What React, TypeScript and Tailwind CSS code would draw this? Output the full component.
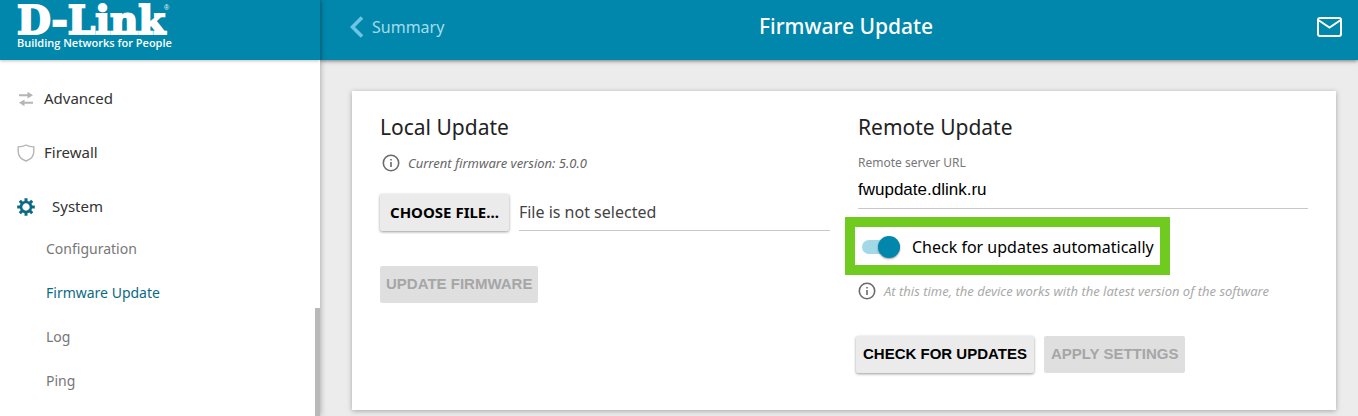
import { useState } from 'react';
import type { ReactNode } from 'react';

const systemLinks = ['Configuration', 'Firmware Update', 'Log', 'Ping'];

function Logo() {
  return (
    <svg className="block" width="164" height="54" viewBox="0 0 164 54" fill="#fff" role="img" aria-label="D-Link">
      <text x="1" y="34" fontFamily="'DejaVu Serif', serif" fontWeight="700" fontSize="39" stroke="#fff" strokeWidth="2">
        D-Link
      </text>
      <text x="148" y="10" fontFamily="'Liberation Sans', sans-serif" fontSize="7">®</text>
      <text x="1" y="47" fontFamily="'Open Sans', sans-serif" fontWeight="600" fontSize="11">
        Building Networks for People
      </text>
    </svg>
  );
}

function ArrowsIcon() {
  return (
    <svg width="16" height="16" viewBox="0 0 16 16" fill="#b5b5b5" aria-hidden="true">
      <path d="M1 3.200h8.500V.8L15 4.200 9.500 7.600V5.200H1zM15 10.800H6.500V8.400L1 11.800l5.500 3.400v-2.400H15z" />
    </svg>
  );
}

function ShieldIcon() {
  return (
    <svg width="18" height="18" viewBox="0 0 18 18" fill="none" stroke="#b5b5b5" strokeWidth="1.400" aria-hidden="true">
      <path d="M9 1C6.800 2.300 4 2.900 1.200 2.900v4.600C1.200 11.800 4.500 15.500 9 17c4.500-1.500 7.800-5.200 7.800-9.500V2.900C14 2.900 11.200 2.300 9 1z" />
    </svg>
  );
}

function GearIcon() {
  return (
    <svg width="18" height="18" viewBox="-9 -9 18 18" fill="none" stroke="#0b6a85" aria-hidden="true">
      <circle r="5" strokeWidth="2.600" />
      <path
        d="M0-5.500V-8.800M0 5.500V8.800M-5.500 0H-8.800M5.500 0H8.800M-3.900-3.900L-6.200-6.200M3.900-3.900L6.200-6.200M-3.900 3.900L-6.200 6.200M3.900 3.900L6.200 6.200"
        strokeWidth="3"
      />
    </svg>
  );
}

function InfoIcon() {
  return (
    <svg className="shrink-0" width="18" height="18" viewBox="0 0 18 18" aria-hidden="true">
      <circle cx="9" cy="9" r="7.700" fill="none" stroke="#6b6b6b" strokeWidth="1.600" />
      <path d="M8.200 8h1.600v5H8.200zM8.200 5h1.600v1.600H8.200z" fill="#6b6b6b" />
    </svg>
  );
}

function MenuItem({ icon, label, wide }: { icon: ReactNode; label: string; wide?: boolean }) {
  return (
    <a href="#" className={`flex h-[54px] items-center text-[15px] text-[#333] ${wide ? 'gap-4' : 'gap-2'}`}>
      <span className="flex w-5 justify-center pt-0.5">{icon}</span>
      {label}
    </a>
  );
}

function Sidebar() {
  return (
    <aside className="relative z-10 flex w-80 shrink-0 flex-col bg-white shadow-[0_0_6px_rgba(0,0,0,0.35)]">
      <div className="h-15 shrink-0 bg-[#0087ab] pl-4 shadow-[0_1px_3px_rgba(0,0,0,0.25)]">
        <Logo />
      </div>
      <nav className="pt-[11px] pl-4">
        <MenuItem icon={<ArrowsIcon />} label="Advanced" />
        <MenuItem icon={<ShieldIcon />} label="Firewall" />
        <MenuItem icon={<GearIcon />} label="System" wide />
        <ul className="-mt-1.5 pl-[30px]">
          {systemLinks.map((label) => (
            <li key={label}>
              <a
                href="#"
                className={`flex h-11 items-center text-sm ${label === 'Firmware Update' ? 'text-[#0b6a85]' : 'text-[#777]'}`}
              >
                {label}
              </a>
            </li>
          ))}
        </ul>
      </nav>
      <div className="absolute right-0 bottom-0 h-[108px] w-[5px] bg-[#b9b9b9]"></div>
    </aside>
  );
}

function TopBar() {
  return (
    <header className="grid h-15 shrink-0 grid-cols-[1fr_auto_1fr] items-center bg-[#0087ab] pr-4 pb-1.5 pl-[30px] shadow-[0_1px_4px_rgba(0,0,0,0.5)]">
      <a href="#" className="flex items-center gap-2 text-base text-[#a5dcec]">
        <svg width="14" height="22" viewBox="0 0 14 22" fill="none" stroke="#6cc5e4" strokeWidth="3.600" aria-hidden="true">
          <path d="M12 1.500 2.500 11 12 20.500" />
        </svg>
        Summary
      </a>
      <h1 className="text-[21px] font-medium text-white">Firmware Update</h1>
      <button type="button" aria-label="Notifications" className="justify-self-end">
        <svg width="25" height="20" viewBox="0 0 25 20" fill="none" stroke="#fff" strokeWidth="2" aria-hidden="true">
          <rect x="1" y="1" width="23" height="18" rx="2" />
          <path d="M2 3.500 12.500 10.500 23 3.500" />
        </svg>
      </button>
    </header>
  );
}

function Button({ children, disabled, className = '' }: { children: ReactNode; disabled?: boolean; className?: string }) {
  return (
    <button
      type="button"
      disabled={disabled}
      className={`h-[37px] rounded-xs font-bold whitespace-nowrap ${
        disabled ? 'bg-[#dfdfdf] text-[#a6a6a6]' : 'bg-[#ebebeb] text-black shadow-[0_1px_3px_rgba(0,0,0,0.4)]'
      } ${className}`}
    >
      {children}
    </button>
  );
}

function LocalUpdate() {
  return (
    <section>
      <h2 className="text-[21px] leading-8 text-[#222]">Local Update</h2>
      <p className="mt-2.5 flex items-center gap-2 pl-0.5 text-[13px] leading-5 text-[#666] italic">
        <InfoIcon />
        Current firmware version: 5.0.0
      </p>
      <div className="mt-[21px] flex items-center gap-2.5">
        <Button className="px-2.5 text-[15px]">CHOOSE FILE...</Button>
        <div className="h-[37px] grow border-b border-[#c8c8c8] text-base leading-9 text-[#444]">File is not selected</div>
      </div>
      <Button disabled className="mt-[35px] px-1.5 font-['Liberation_Sans',sans-serif] text-[15px]">UPDATE FIRMWARE</Button>
    </section>
  );
}

function RemoteUpdate() {
  const [auto, setAuto] = useState(true);

  return (
    <section>
      <h2 className="text-[21px] leading-8 text-[#222]">Remote Update</h2>
      <label htmlFor="server-url" className="mt-2.5 block text-xs leading-5 text-[#777]">Remote server URL</label>
      <input
        id="server-url"
        type="text"
        defaultValue="fwupdate.dlink.ru"
        className="block h-9 w-full border-b border-[#c8c8c8] pb-0.5 font-['Liberation_Sans',sans-serif] text-[17px] text-black outline-none"
      />
      <label className="mt-2 -ml-[13px] flex h-[58px] w-fit items-center gap-3 border-10 border-[#70cb20] pt-0.5 pr-1.5 pl-[7px] text-base text-black">
        <input
          type="checkbox"
          role="switch"
          checked={auto}
          onChange={(e) => setAuto(e.target.checked)}
          className="relative h-3.5 w-[38px] appearance-none rounded-full bg-[#a3d9e6] before:absolute before:-top-1 before:left-0 before:size-[22px] before:rounded-full before:bg-[#0087ab] before:shadow-[0_1px_2px_rgba(0,0,0,0.4)] checked:before:left-4"
        />
        Check for updates automatically
      </label>
      <p className="mt-1.5 flex items-center gap-2 text-[13px] leading-5 text-[#aaa] italic">
        <InfoIcon />
        At this time, the device works with the latest version of the software
      </p>
      <div className="mt-[35px] -ml-0.5 flex gap-2.5 font-['Liberation_Sans',sans-serif] text-[15px]">
        <Button className="px-[7px]">CHECK FOR UPDATES</Button>
        <Button disabled className="px-[7px]">APPLY SETTINGS</Button>
      </div>
    </section>
  );
}

export default function App() {
  return (
    <div className="flex h-screen overflow-hidden bg-[#ececec] font-['Noto_Sans',sans-serif]">
      <Sidebar />
      <div className="flex min-w-0 grow flex-col">
        <TopBar />
        <main className="pt-[31px] pr-[22px] pl-8">
          <div className="grid grid-cols-2 gap-7 bg-white px-7 pt-5 pb-[37px] shadow-[0_1px_5px_rgba(0,0,0,0.3)]">
            <LocalUpdate />
            <RemoteUpdate />
          </div>
        </main>
      </div>
    </div>
  );
}
